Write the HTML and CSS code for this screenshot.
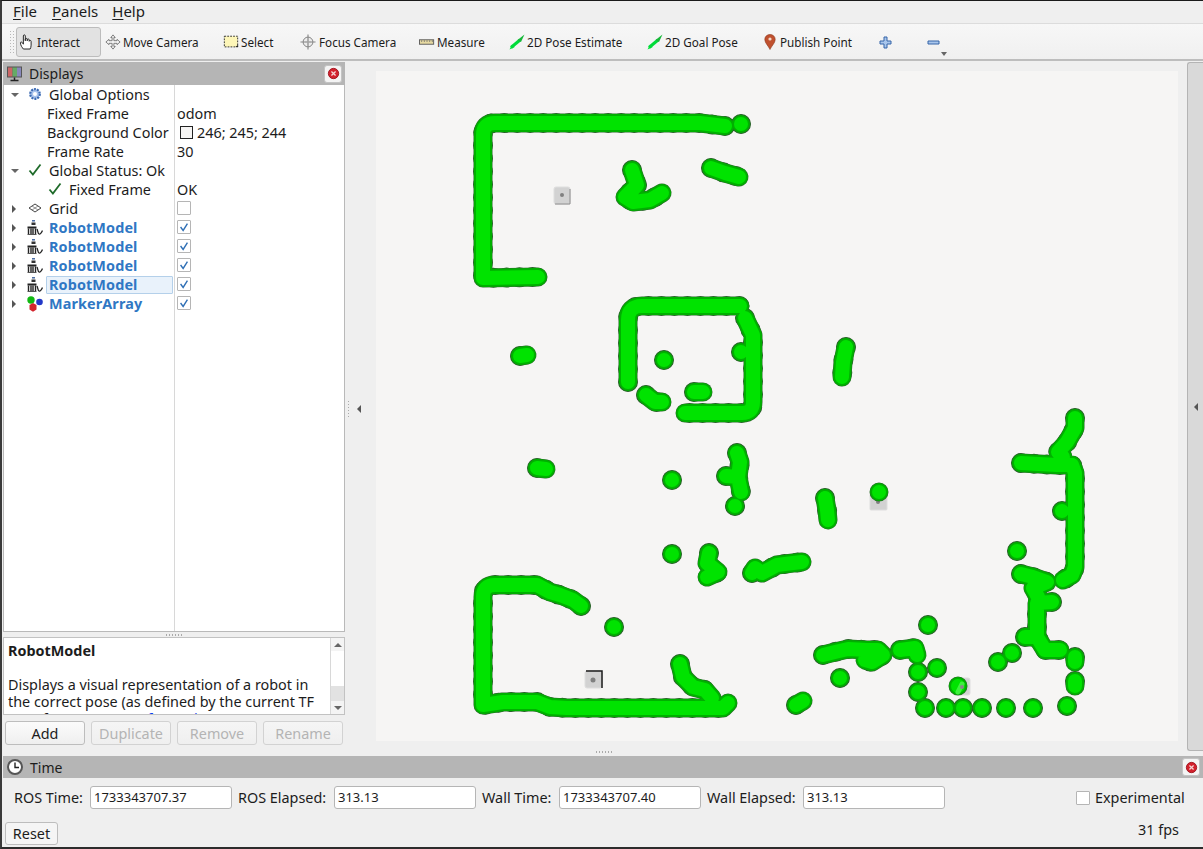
FILE: index.html
```html
<!DOCTYPE html>
<html lang="en">
<head>
<meta charset="utf-8">
<title>RViz</title>
<link rel="stylesheet" href="styles.css">
</head>
<body>
<svg class="defs" width="0" height="0" aria-hidden="true">
  <defs>
    <symbol id="i-close" viewBox="0 0 16 16"><circle cx="8" cy="8" r="5.5" fill="#d3212d" stroke="#a01620"/><path d="M5.8 5.8l4.4 4.4M10.2 5.8l-4.4 4.4" stroke="#f6d5d5" stroke-width="1.4"/></symbol>
    <symbol id="i-robot" viewBox="0 0 16 16"><path d="M5 .8h3" stroke="#3a5f9a" stroke-width="1.4"/><path d="M4.500 2.500h4v2.500h-4z" fill="#333"/><path d="M.5 6.500h9v2h-9z" fill="#222"/><path d="M1.500 8.500v5.500M4 8.500v5.500M6 8.500v5.500M8.500 8.500v5.500" stroke="#222" stroke-width="1.400"/><path d="M.5 14.500h9" stroke="#555"/><path d="M10 9c1 2.500 1 4.500 2 5s2.500-1 3.500-3.500" fill="none" stroke="#222" stroke-width="1.300"/></symbol>
    <symbol id="i-arrow" viewBox="0 0 16 16"><path d="M0.500 15.500l2.500-5 2.800 2.500z" fill="#00e83c"/><path d="M2 13.500L11 6" stroke="#00dc3a" stroke-width="3"/><path d="M8.500 6L15.500 .5 12 8z" fill="#18b83a"/></symbol>
    <symbol id="i-check" viewBox="0 0 14 14"><path d="M1.500 7.500l3.400 4L12.500 1.500" fill="none" stroke="#1f6b2a" stroke-width="1.800"/></symbol>
    <symbol id="i-tick" viewBox="0 0 14 14"><path d="M3 7l3 4 5-8" fill="none" stroke="#2f6fb5" stroke-width="1.600"/></symbol>
  </defs>
</svg>
<div class="app">
  <nav class="menubar">
    <span class="menu"><u>F</u>ile</span>
    <span class="menu"><u>P</u>anels</span>
    <span class="menu"><u>H</u>elp</span>
  </nav>
  <div class="toolbar">
    <div class="grip"></div>
    <div class="tool tool-active">
      <svg class="ticon" viewBox="1 1 15.500 16.500"><path d="M5 16.500c-1-1.500-3-3.500-3-6.500 0-1 1.500-1 2 0l1 1.500V3c0-1.500 2-1.500 2 0v5-1.500c0-1.300 2-1.300 2 0V8 7c0-1.200 2-1.200 2 0v1.500c0-1.200 2-1.200 2 0v4c0 1.800-.5 3-1 4z" fill="#fff" stroke="#222" stroke-width="1"/></svg>
      <span>Interact</span>
    </div>
    <div class="tool">
      <svg class="ticon" viewBox="0 0 18 18"><path d="M9 1l2.500 3H10v3.500h3.500V6L17 9l-3.500 3v-1.500H10V14h1.500L9 17l-2.500-3H8v-3.500H4.500V12L1 9l3.500-3v1.500H8V4H6.500z" fill="#f4f4f4" stroke="#666" stroke-width=".9"/></svg>
      <span>Move Camera</span>
    </div>
    <div class="tool">
      <svg class="ticon" viewBox="0 0 18 18"><rect x="1.500" y="2.500" width="15" height="12" fill="#fdf6b8" stroke="#222" stroke-dasharray="2 1.300"/><path d="M14 14.500h3V12z" fill="#222"/></svg>
      <span>Select</span>
    </div>
    <div class="tool tool-focus">
      <svg class="ticon" viewBox="0 0 18 18"><circle cx="9" cy="9" r="5.500" fill="#ececec" stroke="#777"/><path d="M9 .5v17M.5 9h17" stroke="#888" stroke-width="1.300"/><path d="M9 5.500v7M5.500 9h7" stroke="#aaa"/></svg>
      <span>Focus Camera</span>
    </div>
    <div class="tool">
      <svg class="ticon" viewBox="0 0 18 18"><rect x=".5" y="6.500" width="16" height="5" fill="#e6d9a2" stroke="#555"/><path d="M3 7v2M6 7v2M9 7v2M12 7v2M15 7v2" stroke="#666" stroke-width=".8"/></svg>
      <span>Measure</span>
    </div>
    <div class="tool">
      <svg class="ticon" viewBox="0 0 16 16"><use href="#i-arrow"/></svg>
      <span>2D Pose Estimate</span>
    </div>
    <div class="tool">
      <svg class="ticon" viewBox="0 0 16 16"><use href="#i-arrow"/></svg>
      <span>2D Goal Pose</span>
    </div>
    <div class="tool tool-pin">
      <svg class="ticon-pin" viewBox="0 0 12 16"><path d="M6 .5C2.800.5.800 2.800.8 5.500.8 9 4.500 12 6 15.500 7.500 12 11.200 9 11.200 5.500 11.200 2.800 9.200.5 6 .5z" fill="#c0512f" stroke="#8d3a20" stroke-width=".6"/><circle cx="6" cy="5" r="1.600" fill="#f2d9c8"/></svg>
      <span>Publish Point</span>
    </div>
    <div class="tool">
      <svg class="ticon-small" viewBox="0 0 13 13"><path d="M5 1h3v4h4v3H8v4H5V8H1V5h4z" fill="#a9c6ec" stroke="#3464a8"/></svg>
    </div>
    <div class="tool">
      <svg class="ticon-small" viewBox="0 0 13 13"><path d="M1 5h11v3H1z" fill="#a9c6ec" stroke="#3464a8"/></svg>
      <span class="caret"></span>
    </div>
  </div>

  <div class="main">
    <aside class="dock">
      <header class="titlebar">
        <svg class="title-icon" viewBox="0 0 18 18"><rect x="1" y="1.500" width="15" height="11" fill="#555"/><rect x="2" y="2.500" width="4.500" height="9" fill="#c66"/><rect x="6.500" y="2.500" width="4.500" height="9" fill="#6a6"/><rect x="11" y="2.500" width="4" height="9" fill="#88b"/><path d="M8.500 12.500v3M4.500 15.500h8" stroke="#222" stroke-width="1.500"/></svg>
        <span class="title-text">Displays</span>
        <button class="close"><svg viewBox="0 0 16 16"><use href="#i-close"/></svg></button>
      </header>
      <div class="tree">
        <div class="row"><div class="name"><span class="tw tw-open"></span><svg class="ric" viewBox="0 0 14 14"><circle cx="7" cy="7" r="4.800" fill="#a9c3ec" stroke="#3d6bb3" stroke-width="2.200" stroke-dasharray="2 1"/><circle cx="7" cy="7" r="2" fill="#fff"/></svg><span class="lbl">Global Options</span></div><div class="val"></div></div>
        <div class="row"><div class="name name-sub">Fixed Frame</div><div class="val">odom</div></div>
        <div class="row"><div class="name name-sub">Background Color</div><div class="val"><span class="swatch"></span>246; 245; 244</div></div>
        <div class="row"><div class="name name-sub">Frame Rate</div><div class="val">30</div></div>
        <div class="row"><div class="name"><span class="tw tw-open"></span><svg class="ric" viewBox="0 0 14 14"><use href="#i-check"/></svg><span class="lbl">Global Status: Ok</span></div><div class="val"></div></div>
        <div class="row"><div class="name name-status"><svg class="ric" viewBox="0 0 14 14"><use href="#i-check"/></svg><span class="lbl">Fixed Frame</span></div><div class="val">OK</div></div>
        <div class="row"><div class="name"><span class="tw"></span><svg class="ric" viewBox="0 0 14 14"><path d="M7 3l6 4-6 4-6-4z" fill="none" stroke="#444"/><path d="M4 5l6 4M10 5L4 9" stroke="#777" stroke-width=".8"/></svg><span class="lbl">Grid</span></div><div class="val"><span class="cb"></span></div></div>
        <div class="row"><div class="name"><span class="tw"></span><svg class="ric ric-robot" viewBox="0 0 16 16"><use href="#i-robot"/></svg><span class="lbl lbl-on">RobotModel</span></div><div class="val"><span class="cb"><svg viewBox="0 0 14 14"><use href="#i-tick"/></svg></span></div></div>
        <div class="row"><div class="name"><span class="tw"></span><svg class="ric ric-robot" viewBox="0 0 16 16"><use href="#i-robot"/></svg><span class="lbl lbl-on">RobotModel</span></div><div class="val"><span class="cb"><svg viewBox="0 0 14 14"><use href="#i-tick"/></svg></span></div></div>
        <div class="row"><div class="name"><span class="tw"></span><svg class="ric ric-robot" viewBox="0 0 16 16"><use href="#i-robot"/></svg><span class="lbl lbl-on">RobotModel</span></div><div class="val"><span class="cb"><svg viewBox="0 0 14 14"><use href="#i-tick"/></svg></span></div></div>
        <div class="row"><div class="name"><span class="tw"></span><svg class="ric ric-robot" viewBox="0 0 16 16"><use href="#i-robot"/></svg><span class="lbl lbl-on lbl-sel">RobotModel</span></div><div class="val"><span class="cb"><svg viewBox="0 0 14 14"><use href="#i-tick"/></svg></span></div></div>
        <div class="row"><div class="name"><span class="tw"></span><svg class="ric ric-robot" viewBox="0 0 16 16"><circle cx="4" cy="4" r="3.700" fill="#12b812"/><circle cx="12.500" cy="6" r="3.300" fill="#2238c8"/><path d="M2.500 9l3.500-2 3.500 2v4.500L6 15.800l-3.500-2.300z" fill="#d4242c"/></svg><span class="lbl lbl-on">MarkerArray</span></div><div class="val"><span class="cb"><svg viewBox="0 0 14 14"><use href="#i-tick"/></svg></span></div></div>
        <div class="row-fill"><div class="name"></div><div class="val"></div></div>
      </div>
      <div class="hsplit"><span class="dots"></span></div>
      <div class="desc">
        <div class="desc-text">
          <p class="desc-title">RobotModel</p>
          <p class="desc-body">Displays a visual representation of a robot in<br>the correct pose (as defined by the current TF<br>transforms). <a class="desc-link">More Information</a>.</p>
        </div>
        <div class="scroll">
          <span class="scroll-btn"><span class="up"></span></span>
          <span class="scroll-track"><span class="scroll-thumb"></span></span>
          <span class="scroll-btn"><span class="down"></span></span>
        </div>
      </div>
      <div class="actions">
        <button class="btn">Add</button>
        <button class="btn" disabled>Duplicate</button>
        <button class="btn" disabled>Remove</button>
        <button class="btn" disabled>Rename</button>
      </div>
    </aside>

    <div class="collapse-left"><span class="vdots"></span><span class="tri-left"></span></div>

    <div class="view">
      <svg class="scene" viewBox="376 71 802 670" width="802" height="670" role="img" aria-label="3D view">
        <defs>
          <g id="blobs" fill="none" stroke-linecap="round" stroke-linejoin="round">
            <path d="M741 124h.01M725 126L700 123H640L540 123H495Q483 123 483 135V278L538 277"/>
            <path d="M632 170h.01L637 185L625 197L633 202L650 200L662 193M637 185L628 195"/>
            <path d="M711 168L725 173L739 177"/>
            <path d="M628 382V320Q628 306 642 306H740M745 318L753 335V402Q753 413 742 413H685"/>
            <path d="M520 356L527 355"/>
            <path d="M664 360h.01M741 352h.01"/>
            <path d="M646 395L655 402L662 402"/>
            <path d="M694 392H703"/>
            <path d="M846 347L843 362L842 377"/>
            <path d="M537 468L546 469"/>
            <path d="M672 480h.01"/>
            <path d="M737 453L740 462L738 477L741 492M726 476L738 477M735 506h.01"/>
            <path d="M825 498L827 510L828 520"/>
            <path d="M672 554h.01"/>
            <path d="M709 553L707 563L718 572L707 577"/>
            <path d="M752 573L755 568L762 573L777 565L793 563L802 562"/>
            <path d="M1075 418V428L1067 442L1058 452L1063 457M1021 463L1057 465H1072L1075 473V567L1072 575L1063 580"/>
            <path d="M1062 511h.01M1017 551h.01"/>
            <path d="M1021 574L1033 577L1047 582L1033 588L1038 597M1052 602L1037 603V637L1045 650H1060M1025 637L1037 637"/>
            <path d="M1075 657V662M1075 681V686M1067 706h.01"/>
            <path d="M1012 653h.01M998 662h.01M928 625h.01M937 668h.01M840 678h.01"/>
            <path d="M796 705L803 701"/>
            <path d="M823 655L835 652L848 649L867 650H878L883 655L872 662L865 660"/>
            <path d="M900 650L915 648L917 655"/>
            <path d="M918 672h.01M918 692h.01M925 708h.01M946 708h.01M963 708h.01M982 708h.01M1006 708h.01M1033 708h.01"/>
            <path d="M581 606L573 600L560 595L550 592L537 585H495Q483 585 483 597V705L503 702H537L550 707L567 708H723L728 703"/>
            <path d="M614 627h.01"/>
            <path d="M680 664L683 677L693 687L705 690L712 698"/>
          </g>
          <g id="blobs-top" fill="none" stroke-linecap="round">
            <path d="M879 492h.01M958 686h.01"/>
          </g>
        </defs>
        <rect class="scene-bg" x="376" y="71" width="802" height="670"/>
        <g class="robot"><rect x="554" y="187" width="16" height="17" rx="2"/><path class="robot-edge" d="M555 204h15v-15"/><circle cx="562" cy="195" r="2"/></g>
        <g class="robot"><rect x="870" y="494" width="17" height="16" rx="1"/><circle cx="878" cy="502" r="2"/></g>
        <g class="robot"><rect x="585" y="671" width="17" height="17" rx="2"/><path class="robot-edge robot-edge-dark" d="M586 671h16v17"/><circle cx="593" cy="680" r="2.500"/></g>
        <g class="robot"><rect x="953" y="678" width="17" height="17" rx="2"/></g>
        <use href="#blobs" class="b-bead"/>
        <use href="#blobs" class="b-edge"/>
        <use href="#blobs" class="b-mid"/>
        <use href="#blobs" class="b-bright"/>
        <use href="#blobs-top" class="b-edge"/>
        <use href="#blobs-top" class="b-mid"/>
        <use href="#blobs-top" class="b-bright"/>
        <path class="robot-stripe" d="M962 684L958 692"/>
        <circle class="robot-hub" cx="962" cy="687" r="2"/>
      </svg>
    </div>

    <div class="collapse-right"><span class="tri-left"></span></div>
  </div>

  <div class="vsplit"><span class="dots"></span></div>

  <section class="time">
    <header class="titlebar titlebar-time">
      <svg class="title-icon" viewBox="0 0 18 18"><circle cx="9" cy="9" r="7" fill="#fff" stroke="#555" stroke-width="2"/><path d="M9 4.500V9.500H13" fill="none" stroke="#222" stroke-width="1.400"/></svg>
      <span class="title-text">Time</span>
      <button class="close"><svg viewBox="0 0 16 16"><use href="#i-close"/></svg></button>
    </header>
    <div class="time-row">
      <label class="t-label t-first">ROS Time:</label><span class="t-input">1733343707.37</span>
      <label class="t-label">ROS Elapsed:</label><span class="t-input">313.13</span>
      <label class="t-label">Wall Time:</label><span class="t-input">1733343707.40</span>
      <label class="t-label">Wall Elapsed:</label><span class="t-input">313.13</span>
      <span class="t-spacer"></span>
      <span class="cb cb-exp"></span><label class="t-exp">Experimental</label>
    </div>
    <div class="time-foot">
      <button class="btn btn-reset">Reset</button>
      <span class="fps">31 fps</span>
    </div>
  </section>
</div>
</body>
</html>
```

FILE: styles.css
```css
* { box-sizing: border-box; }
html, body { margin: 0; padding: 0; }
body {
  width: 1203px;
  height: 849px;
  overflow: hidden;
  background: #efefef;
  font-family: "Noto Sans", "Open Sans", sans-serif;
  font-size: 14px;
  color: #1c1c1c;
}
.defs { position: absolute; }
.app {
  width: 1203px;
  height: 849px;
  display: flex;
  flex-direction: column;
  border-top: 1px solid #1a1a1a;
  border-left: 2px solid #3a3a3a;
  border-bottom: 2px solid #2c2c2c;
  background: #efefef;
}

/* menu */
.menubar {
  height: 22px;
  display: flex;
  align-items: center;
  gap: 14px;
  padding: 0 0 2px 11px;
  background: #efefef;
  font-size: 15px;
  flex: none;
}
.menu u { text-underline-offset: 2px; }
.menu:first-child { margin-right: 1px; }

/* toolbar */
.toolbar {
  flex: none;
  height: 38px;
  display: grid;
  grid-template-columns: 14px 85px 118px 77px 119px 90px 138px 117px 115px 48px 40px;
  align-items: center;
  background: linear-gradient(#f7f7f7, #f0f0f0);
  border-top: 1px solid #dcdcdc;
  border-bottom: 2px solid #bdbdbd;
  padding-top: 1px;
}
.grip {
  height: 24px;
  width: 6px;
  margin-left: 7px;
  background-image: radial-gradient(circle, #b8b8b8 .7px, transparent .9px);
  background-size: 3px 3px;
}
.tool {
  position: relative;
  height: 30px;
  display: flex;
  align-items: center;
  gap: 2px;
  white-space: nowrap;
  font-size: 11.7px;
}
.toolbar > .tool:not(.tool-active) { margin-left: 4px; }
.tool-active {
  background: #e2e2e2;
  border: 1px solid #bcbcbc;
  border-radius: 3px;
  padding-left: 2px;
}
.tool-focus { gap: 3px; }
.ticon { width: 16px; height: 16px; flex: none; }
.ticon-pin { width: 12px; height: 16px; flex: none; margin-right: 2px; }
.ticon-small { width: 13px; height: 13px; flex: none; }
.caret {
  position: absolute;
  left: 14px;
  bottom: 1px;
  border-left: 3px solid transparent;
  border-right: 3px solid transparent;
  border-top: 4px solid #666;
}

/* main */
.main {
  flex: 1;
  min-height: 0;
  display: flex;
  padding-top: 1px;
}
.dock {
  width: 342px;
  margin-left: 1px;
  padding-bottom: 9px;
  flex: none;
  display: flex;
  flex-direction: column;
}
.titlebar {
  height: 23px;
  flex: none;
  display: flex;
  align-items: center;
  background: #b5b5b5;
  padding-left: 3px;
  padding-right: 3px;
  font-size: 14px;
}
.title-icon { width: 18px; height: 18px; flex: none; }
.title-text { margin-left: 5px; flex: 1; }
.close {
  width: 18px;
  height: 18px;
  padding: 0;
  display: flex;
  align-items: center;
  justify-content: center;
  background: #f4f4f4;
  border: 1px solid #c4c4c4;
  border-radius: 3px;
}
.close svg { width: 15px; height: 15px; }

.tree {
  flex: 1;
  min-height: 0;
  display: flex;
  flex-direction: column;
  background: #fff;
  border: 1px solid #b9b9b9;
  border-top: 0;
  font-size: 14.4px;
}
.row {
  display: grid;
  grid-template-columns: 171px 1fr;
  height: 19px;
  flex: none;
}
.row-fill {
  display: grid;
  grid-template-columns: 171px 1fr;
  flex: 1;
}
.name {
  position: relative;
  display: flex;
  align-items: center;
  border-right: 1px solid #d8d8d8;
  padding-left: 45px;
  white-space: nowrap;
}
.name-sub { padding-left: 43px; }
.name-status { padding-left: 65px; }
.val {
  display: flex;
  align-items: center;
  padding-left: 2px;
  white-space: nowrap;
}
.tw {
  position: absolute;
  left: 8px;
  top: 6px;
  border-top: 4px solid transparent;
  border-bottom: 4px solid transparent;
  border-left: 4px solid #555;
}
.tw-open {
  left: 7px;
  top: 8px;
  border-left: 4px solid transparent;
  border-right: 4px solid transparent;
  border-top: 4px solid #666;
  border-bottom: 0;
}
.ric { position: absolute; left: 24px; top: 2px; width: 14px; height: 14px; }
.ric-robot { left: 23px; width: 16px; height: 16px; top: 2px; }
.name-status .ric { left: 44px; top: 2px; }
.lbl-on { font-weight: 700; color: #2f77c4; letter-spacing: .12px; }
.lbl-sel {
  margin-left: -3px;
  padding-left: 2px;
  width: 127px;
  height: 18px;
  line-height: 16px;
  background: #e9f2fb;
  border: 1px solid #b4d0ea;
  border-radius: 1px;
}
.swatch {
  width: 13px;
  height: 13px;
  margin: 0 4px 0 3px;
  background: #f6f5f4;
  border: 1px solid #222;
}
.cb {
  display: block;
  width: 14px;
  height: 14px;
  margin-bottom: 2px;
  background: #fff;
  border: 1px solid #b5b5b5;
  border-radius: 1px;
  flex: none;
}
.cb svg { display: block; width: 12px; height: 12px; }
.cb-exp { margin-bottom: 0; }

.hsplit {
  height: 5px;
  flex: none;
  display: flex;
  align-items: center;
  justify-content: center;
}
.dots {
  width: 18px;
  height: 2px;
  background-image: radial-gradient(circle, #aaa .6px, transparent .8px);
  background-size: 3px 2px;
}
.desc {
  height: 78px;
  flex: none;
  display: flex;
  background: #fff;
  border: 1px solid #c2c2c2;
}
.desc-text {
  flex: 1;
  padding: 4px 0 0 4px;
  overflow: hidden;
  font-size: 14.4px;
  line-height: 17px;
  white-space: nowrap;
}
.desc-text p { margin: 0; }
.desc-text .desc-title { font-weight: 700; margin-bottom: 17px; }
.desc-link { color: #0a3cf0; }
.scroll {
  width: 14px;
  flex: none;
  display: flex;
  flex-direction: column;
  border-left: 1px solid #d8d8d8;
  background: #f4f4f4;
}
.scroll-btn {
  height: 13px;
  flex: none;
  display: flex;
  align-items: center;
  justify-content: center;
}
.scroll-track {
  flex: 1;
  display: flex;
  flex-direction: column;
  justify-content: flex-end;
  background: #fff;
}
.scroll-thumb { height: 15px; background: #e2e2e2; }
.up { border-left: 4px solid transparent; border-right: 4px solid transparent; border-bottom: 4px solid #666; }
.down { border-left: 4px solid transparent; border-right: 4px solid transparent; border-top: 4px solid #666; }

.actions {
  flex: none;
  display: grid;
  grid-template-columns: 80px 80px 80px 80px;
  column-gap: 6px;
  padding: 6px 0 1px 2px;
}
.btn {
  height: 24px;
  padding: 0;
  font: inherit;
  font-size: 14.4px;
  color: #1c1c1c;
  background: linear-gradient(#fbfbfb, #efefef);
  border: 1px solid #bdbdbd;
  border-radius: 3px;
}
.btn:disabled { color: #b4b4b4; border-color: #d2d2d2; background: linear-gradient(#f5f5f5, #efefef); }

.collapse-left {
  flex: none;
  width: 31px;
  display: flex;
  align-items: center;
  padding-left: 2px;
  gap: 7px;
}
.vdots {
  width: 3px;
  height: 18px;
  background-image: radial-gradient(circle, #aaa .8px, transparent 1px);
  background-size: 3px 3px;
}
.tri-left {
  border-top: 4px solid transparent;
  border-bottom: 4px solid transparent;
  border-right: 4px solid #555;
}
.view {
  flex: none;
  width: 802px;
  padding-top: 9px;
}
.scene { display: block; }
.scene-bg { fill: #f6f5f4; }
.b-bead { stroke: #255f25; stroke-width: 20px; stroke-dasharray: 0 13; }
.b-edge { stroke: #2b6b2b; stroke-width: 19px; }
.b-mid { stroke: #00b000; stroke-width: 18px; }
.b-bright { stroke: #00e300; stroke-width: 14px; }
.robot rect { fill: #d2d2d2; stroke: #dedede; }
.robot circle { fill: #808080; }
.robot-edge { fill: none; stroke: #8a8a8a; }
.robot-edge-dark { stroke: #1a1a1a; stroke-width: 1.5px; }
.robot-stripe { stroke: #3ef03e; stroke-width: 5px; stroke-linecap: round; fill: none; }
.robot-hub { fill: #888; }

.collapse-right {
  flex: none;
  width: 16px;
  height: 689px;
  margin-left: 9px;
  display: flex;
  align-items: center;
  justify-content: center;
  background: #d9d9d9;
  border: 1px solid #b4b4b4;
  border-right: 0;
  border-radius: 3px 0 0 3px;
}

.vsplit {
  flex: none;
  height: 1px;
  position: relative;
}
.vsplit .dots { position: absolute; left: 593px; top: -4px; }

/* time panel */
.time { flex: none; height: 91px; display: flex; flex-direction: column; padding-left: 1px; }
.titlebar-time { height: 22px; }
.titlebar-time .title-text { margin-left: 6px; }
.time-row {
  display: grid;
  grid-template-columns: 87px 142px 102px 142px 83px 142px 102px 142px 131px 19px 1fr;
  align-items: center;
  height: 23px;
  margin-top: 8px;
  font-size: 14.4px;
}
.t-label { white-space: nowrap; padding-left: 6px; }
.t-first { padding-left: 11px; }
.t-input {
  height: 23px;
  line-height: 21px;
  padding-left: 3px;
  font-size: 13px;
  background: #fff;
  border: 1px solid #b5b5b5;
  border-radius: 3px;
}
.t-exp { white-space: nowrap; }
.time-foot {
  display: flex;
  justify-content: space-between;
  align-items: flex-start;
  padding: 13px 24px 0 2px;
  font-size: 14.4px;
}
.btn-reset { width: 53px; height: 23px; background: #f5f5f5; }
.fps { white-space: nowrap; margin-top: -2px; }
```
